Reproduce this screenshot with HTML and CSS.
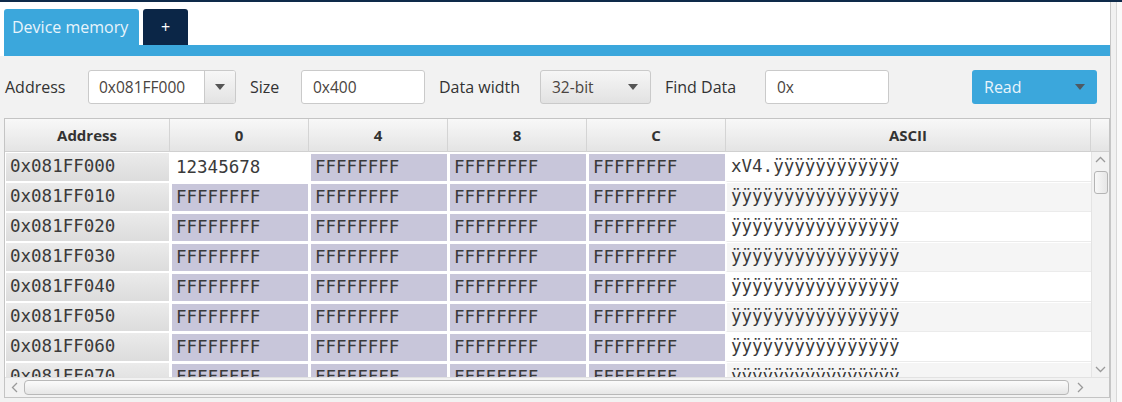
FILE: index.html
```html
<!DOCTYPE html>
<html>
<head>
<meta charset="utf-8">
<link rel="stylesheet" href="styles.css">
</head>
<body>
<div class="topline"></div>
<div class="window">
  <div class="main">
    <div class="tabs">
      <div class="tab tab-active">Device memory</div>
      <div class="tab tab-add">+</div>
    </div>
    <div class="strip"></div>
    <div class="content">
      <div class="toolbar">
        <span class="lbl lbl-address">Address</span>
        <div class="field combo combo-address">
          <span class="combo-text">0x081FF000</span>
          <span class="combo-btn"><svg width="10" height="6" viewBox="0 0 10 6"><path d="M0 0H10L5 6Z" fill="#555"/></svg></span>
        </div>
        <span class="lbl lbl-size">Size</span>
        <div class="field input">0x400</div>
        <span class="lbl lbl-width">Data width</span>
        <div class="field combo combo-width">
          <span class="combo-text">32-bit</span>
          <svg class="combo-arrow" width="10" height="6" viewBox="0 0 10 6"><path d="M0 0H10L5 6Z" fill="#555"/></svg>
        </div>
        <span class="lbl lbl-find">Find Data</span>
        <div class="field input">0x</div>
        <div class="read-btn">
          <span>Read</span>
          <svg width="10" height="6" viewBox="0 0 10 6"><path d="M0 0H10L5 6Z" fill="#4f5a62"/></svg>
        </div>
      </div>
      <div class="table">
        <div class="thead">
          <div class="th c-addr">Address</div>
          <div class="th c-hex">0</div>
          <div class="th c-hex">4</div>
          <div class="th c-hex">8</div>
          <div class="th c-hex">C</div>
          <div class="th c-ascii">ASCII</div>
          <div class="th c-scroll"></div>
        </div>
        <div class="tbody">
          <div class="rows">
            <div class="row">
              <div class="cell addr c-addr">0x081FF000</div>
              <div class="cell hex hex-edited c-hex">12345678</div>
              <div class="cell hex c-hex">FFFFFFFF</div>
              <div class="cell hex c-hex">FFFFFFFF</div>
              <div class="cell hex c-hex">FFFFFFFF</div>
              <div class="cell ascii c-ascii">xV4.ÿÿÿÿÿÿÿÿÿÿÿÿ</div>
            </div>
            <div class="row row-alt">
              <div class="cell addr c-addr">0x081FF010</div>
              <div class="cell hex c-hex">FFFFFFFF</div>
              <div class="cell hex c-hex">FFFFFFFF</div>
              <div class="cell hex c-hex">FFFFFFFF</div>
              <div class="cell hex c-hex">FFFFFFFF</div>
              <div class="cell ascii c-ascii">ÿÿÿÿÿÿÿÿÿÿÿÿÿÿÿÿ</div>
            </div>
            <div class="row">
              <div class="cell addr c-addr">0x081FF020</div>
              <div class="cell hex c-hex">FFFFFFFF</div>
              <div class="cell hex c-hex">FFFFFFFF</div>
              <div class="cell hex c-hex">FFFFFFFF</div>
              <div class="cell hex c-hex">FFFFFFFF</div>
              <div class="cell ascii c-ascii">ÿÿÿÿÿÿÿÿÿÿÿÿÿÿÿÿ</div>
            </div>
            <div class="row row-alt">
              <div class="cell addr c-addr">0x081FF030</div>
              <div class="cell hex c-hex">FFFFFFFF</div>
              <div class="cell hex c-hex">FFFFFFFF</div>
              <div class="cell hex c-hex">FFFFFFFF</div>
              <div class="cell hex c-hex">FFFFFFFF</div>
              <div class="cell ascii c-ascii">ÿÿÿÿÿÿÿÿÿÿÿÿÿÿÿÿ</div>
            </div>
            <div class="row">
              <div class="cell addr c-addr">0x081FF040</div>
              <div class="cell hex c-hex">FFFFFFFF</div>
              <div class="cell hex c-hex">FFFFFFFF</div>
              <div class="cell hex c-hex">FFFFFFFF</div>
              <div class="cell hex c-hex">FFFFFFFF</div>
              <div class="cell ascii c-ascii">ÿÿÿÿÿÿÿÿÿÿÿÿÿÿÿÿ</div>
            </div>
            <div class="row row-alt">
              <div class="cell addr c-addr">0x081FF050</div>
              <div class="cell hex c-hex">FFFFFFFF</div>
              <div class="cell hex c-hex">FFFFFFFF</div>
              <div class="cell hex c-hex">FFFFFFFF</div>
              <div class="cell hex c-hex">FFFFFFFF</div>
              <div class="cell ascii c-ascii">ÿÿÿÿÿÿÿÿÿÿÿÿÿÿÿÿ</div>
            </div>
            <div class="row">
              <div class="cell addr c-addr">0x081FF060</div>
              <div class="cell hex c-hex">FFFFFFFF</div>
              <div class="cell hex c-hex">FFFFFFFF</div>
              <div class="cell hex c-hex">FFFFFFFF</div>
              <div class="cell hex c-hex">FFFFFFFF</div>
              <div class="cell ascii c-ascii">ÿÿÿÿÿÿÿÿÿÿÿÿÿÿÿÿ</div>
            </div>
            <div class="row row-alt">
              <div class="cell addr c-addr">0x081FF070</div>
              <div class="cell hex c-hex">FFFFFFFF</div>
              <div class="cell hex c-hex">FFFFFFFF</div>
              <div class="cell hex c-hex">FFFFFFFF</div>
              <div class="cell hex c-hex">FFFFFFFF</div>
              <div class="cell ascii c-ascii">ÿÿÿÿÿÿÿÿÿÿÿÿÿÿÿÿ</div>
            </div>
          </div>
          <div class="vscroll">
            <svg class="chev-up" width="11" height="7" viewBox="0 0 11 7"><path d="M1 6L5.5 1.5L10 6" fill="none" stroke="#9a9a9a" stroke-width="1.3"/></svg>
            <div class="vthumb"></div>
            <div class="vspacer"></div>
            <svg class="chev-down" width="11" height="7" viewBox="0 0 11 7"><path d="M1 1L5.5 5.5L10 1" fill="none" stroke="#9a9a9a" stroke-width="1.3"/></svg>
          </div>
        </div>
        <div class="hscroll">
          <div class="harrow"><svg width="7" height="11" viewBox="0 0 7 11"><path d="M6 1L1.5 5.5L6 10" fill="none" stroke="#9a9a9a" stroke-width="1.3"/></svg></div>
          <div class="hthumb"></div>
          <div class="harrow harrow-right"><svg width="7" height="11" viewBox="0 0 7 11"><path d="M1 1L5.5 5.5L1 10" fill="none" stroke="#9a9a9a" stroke-width="1.3"/></svg></div>
          <div class="corner"></div>
        </div>
      </div>
    </div>
  </div>
  <div class="edge"><div class="edge-inner"></div></div>
</div>
</body>
</html>
```
FILE: styles.css
```css
* { box-sizing: border-box; }
html, body { margin: 0; padding: 0; }
body {
  width: 1122px;
  height: 402px;
  overflow: hidden;
  background: #fff;
  font-family: "Open Sans", "Liberation Sans", sans-serif;
  color: #333;
}
.topline { height: 2px; background: #0e2a4a; }
.window { display: flex; height: 400px; }
.main { width: 1110px; display: flex; flex-direction: column; }
.edge {
  flex: 1;
  display: flex;
  border-left: 1px solid #c6c6c6;
  background: #f1f1f1;
}
.edge-inner {
  flex: 1;
  margin-left: 5px;
  border-left: 1px solid #d8d8d8;
  background: #fafafa;
}

/* tabs */
.tabs { display: flex; gap: 4px; padding: 7px 0 0 4px; height: 43px; }
.tab {
  height: 36px;
  border-radius: 3px 3px 0 0;
  font-size: 16px;
  line-height: 36px;
}
.tab-active { width: 135px; background: #3ba7dc; color: #e8f4fb; padding-left: 8px; }
.tab-add { width: 45px; background: #0b2647; color: #fff; text-align: center; }
.strip { height: 11px; margin-left: 4px; background: #3ba7dc; }

.content { flex: 1; background: #f2f2f2; }

/* toolbar */
.toolbar { height: 62px; display: flex; align-items: center; padding-left: 5px; }
.lbl { font-size: 16px; color: #333; }
.lbl-address { width: 83px; }
.lbl-size { width: 51px; }
.lbl-width { width: 101px; }
.lbl-find { width: 100px; }
.field {
  height: 34px;
  border: 1px solid #cacaca;
  border-radius: 3px;
  background: #fff;
  font-size: 15.5px;
  color: #4a4440;
  display: flex;
  align-items: center;
  margin-right: 14px;
}
.input { width: 124px; padding-left: 11px; }
.combo-address { width: 148px; padding-left: 10px; }
.combo-text { flex: 1; }
.combo-btn {
  width: 31px;
  height: 100%;
  border-left: 1px solid #cacaca;
  border-radius: 0 2px 2px 0;
  background: linear-gradient(#f7f7f7, #e3e3e3);
  display: flex;
  align-items: center;
  justify-content: center;
}
.combo-width {
  width: 111px;
  padding: 0 12px 0 11px;
  background: linear-gradient(#f6f6f6, #e2e2e2);
}
.read-btn {
  margin-left: auto;
  margin-right: 13px;
  width: 125px;
  height: 34px;
  border-radius: 3px;
  background: #3ba7dc;
  color: #e8f4fb;
  font-size: 16px;
  display: flex;
  align-items: center;
  justify-content: space-between;
  padding: 0 12px 0 12px;
}

/* table */
.table {
  margin-left: 4px;
  width: 1106px;
  border: 1px solid #c4c4c4;
  background: #fff;
}
.c-addr { width: 165px; flex: none; }
.c-hex { width: 139px; flex: none; }
.c-ascii { width: 365px; flex: none; }
.c-scroll { width: 18px; flex: none; }
.thead { display: flex; height: 33px; }
.th {
  height: 33px;
  background: linear-gradient(#f8f8f8, #e4e4e4);
  border-right: 1px solid #d4d4d4;
  border-bottom: 1px solid #d0d0d0;
  font-weight: 700;
  font-size: 15px;
  text-align: center;
  line-height: 32px;
  color: #333;
}
.th.c-scroll { border-right: none; }
.tbody { display: flex; height: 225px; }
.rows { width: 1086px; overflow: hidden; }
.row {
  display: flex;
  height: 30px;
  font-family: "DejaVu Sans Mono", "Liberation Mono", monospace;
  font-size: 17.5px;
  color: #3a3a3a;
}
.cell {
  height: 30px;
  border-style: solid;
  border-color: #fff;
  border-width: 2px 1px 1px 2px;
  padding-left: 4px;
  line-height: 26px;
  white-space: nowrap;
  overflow: hidden;
}
.addr {
  border-width: 1px 1px 1px 1px;
  background: linear-gradient(#ebebeb, #dcdcdc);
}
.hex { background: #c8c6da; }
.hex-edited { background: #fff; }
.ascii {
  border-width: 1px 0 1px 1px;
  border-color: #fff #fff #ebebeb #fff;
  background: #fff;
}
.row-alt .ascii { background: #f5f5f5; }

.vscroll {
  width: 18px;
  background: #f2f2f2;
  border-left: 1px solid #e4e4e4;
  display: flex;
  flex-direction: column;
  align-items: center;
}
.chev-up { margin-top: 4px; }
.vthumb {
  margin-top: 8px;
  width: 14px;
  height: 23px;
  border: 1px solid #b4b4b4;
  border-radius: 3px;
  background: linear-gradient(90deg, #f8f8f8, #e6e6e6);
}
.vspacer { flex: 1; }
.chev-down { margin-bottom: 4px; }

.hscroll {
  display: flex;
  align-items: center;
  height: 20px;
  background: #f2f2f2;
  border-top: 1px solid #e2e2e2;
}
.harrow {
  width: 19px;
  height: 100%;
  display: flex;
  align-items: center;
  justify-content: center;
}
.harrow-right { width: 22px; }
.hthumb {
  width: 1045px;
  height: 15px;
  border: 1px solid #b8b8b8;
  border-radius: 4px;
  background: linear-gradient(#fbfbfb, #e6e6e6);
}
.corner { width: 18px; height: 100%; }
```
